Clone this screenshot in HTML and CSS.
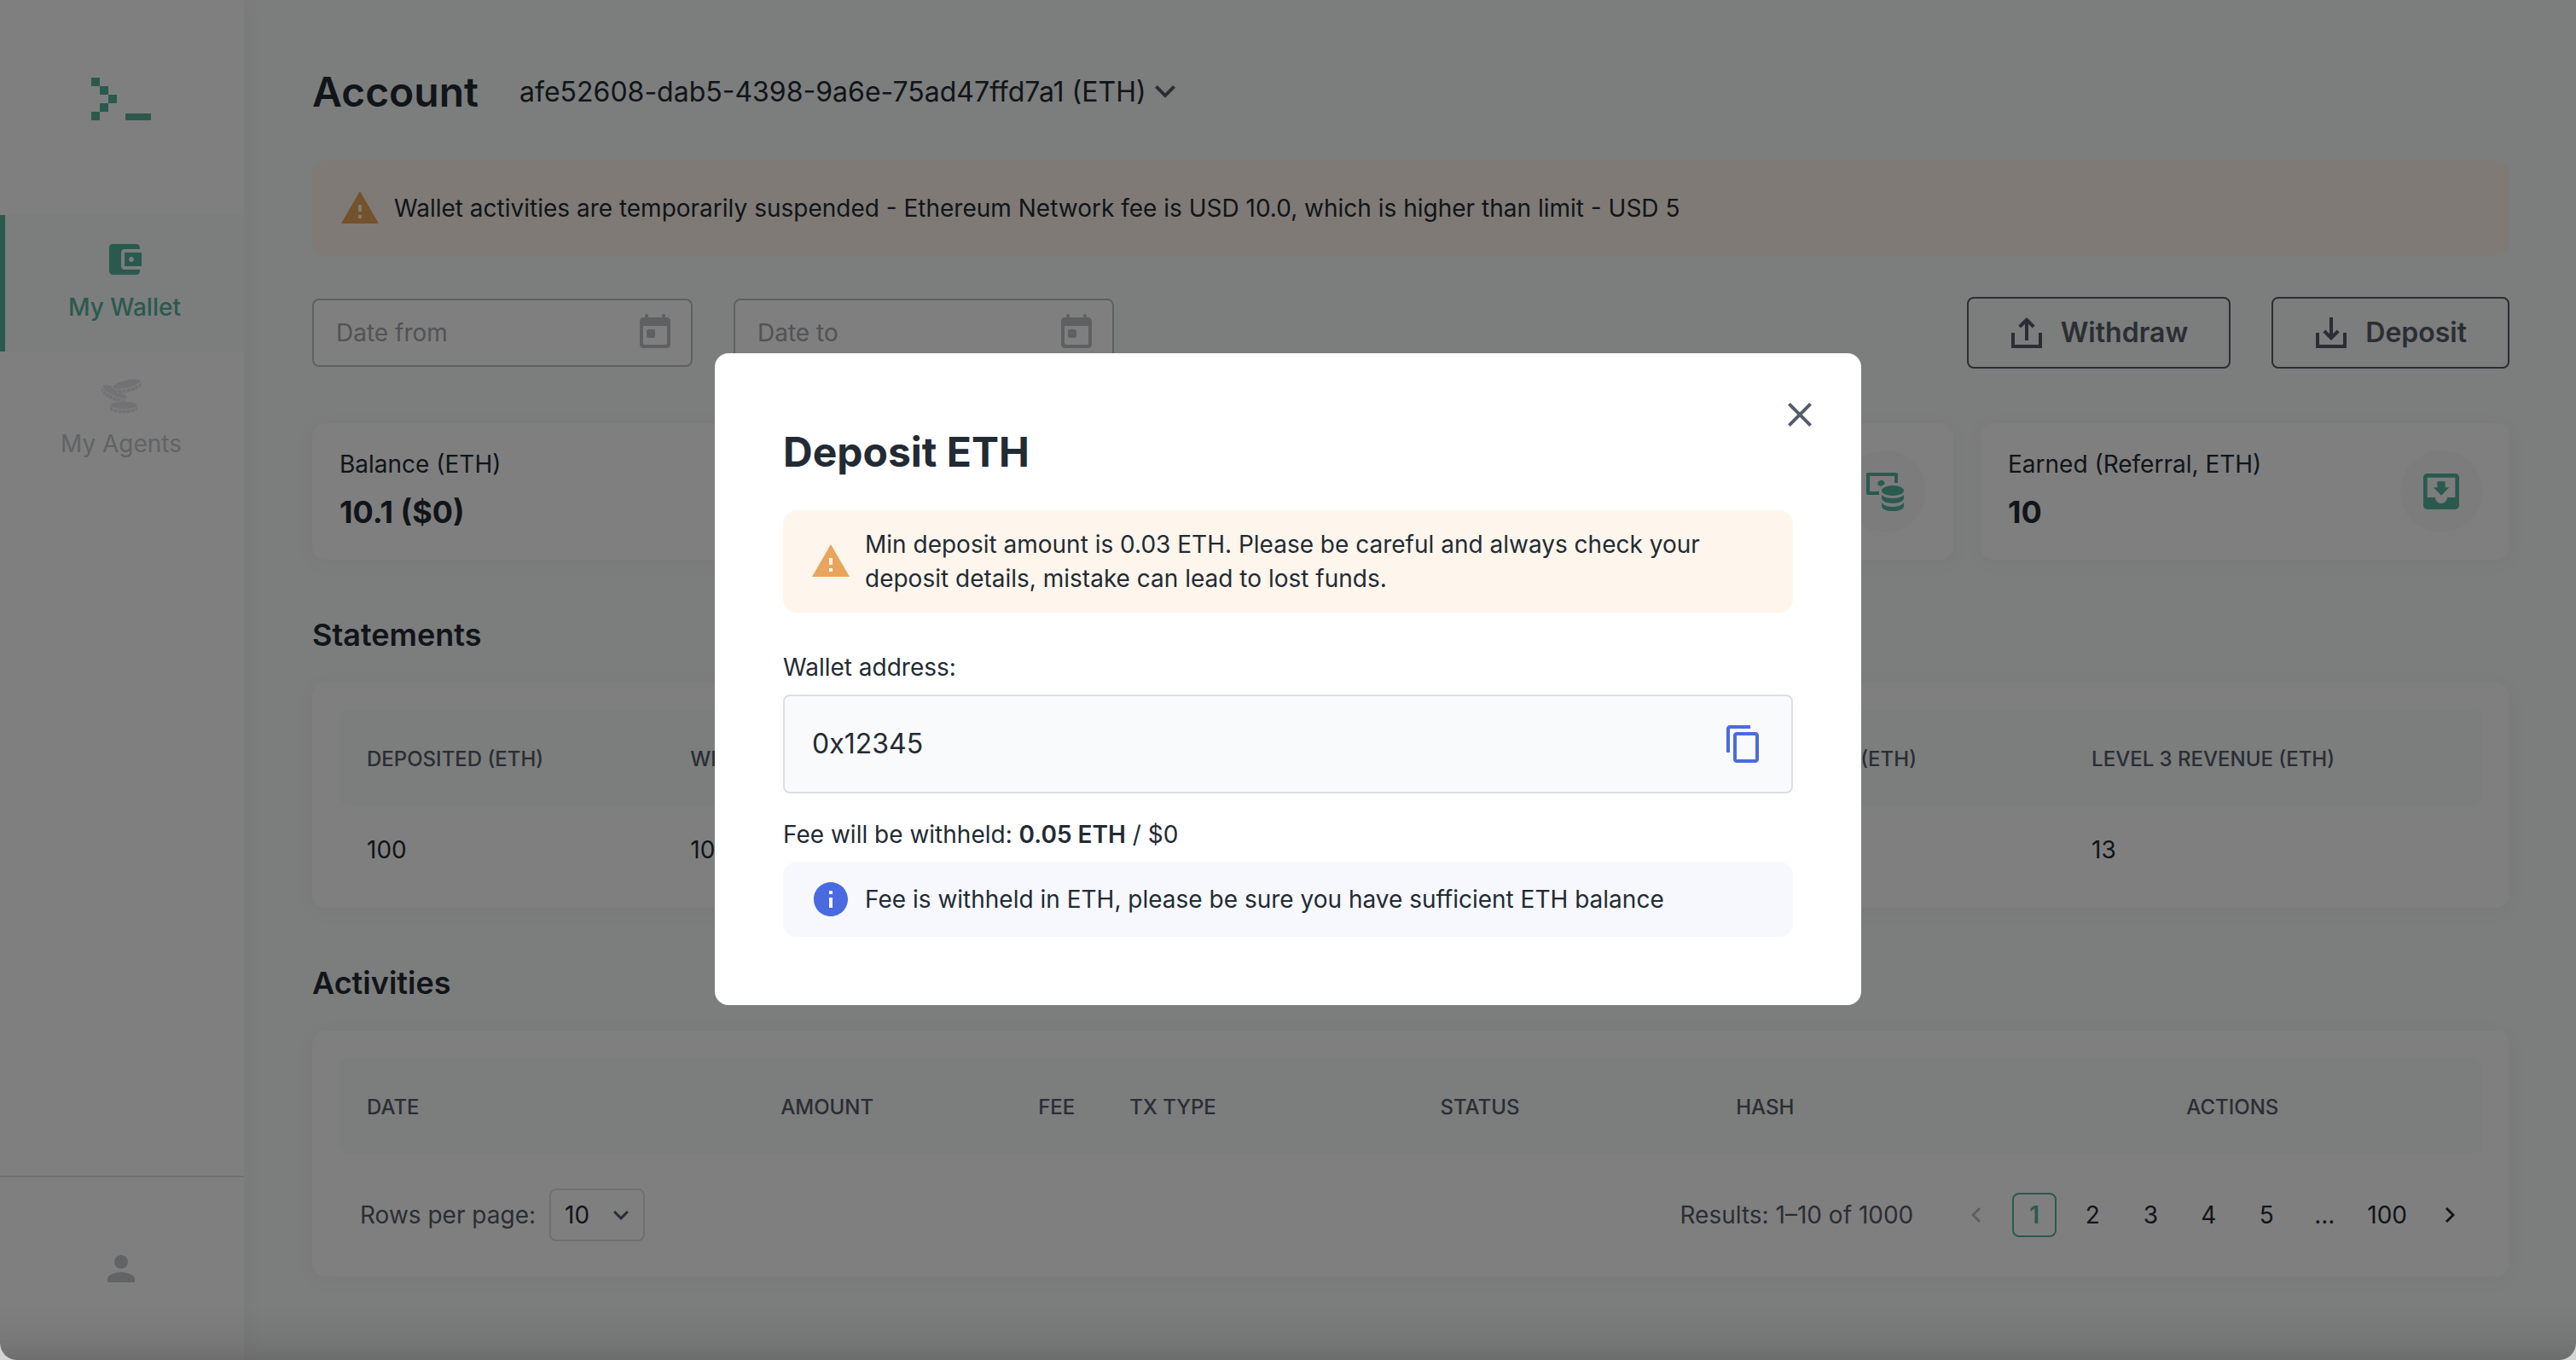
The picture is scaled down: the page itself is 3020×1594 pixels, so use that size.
FILE: index.html
```html
<!DOCTYPE html>
<html lang="en">
<head>
<meta charset="utf-8">
<meta name="viewport" content="width=device-width, initial-scale=1">
<title>Account</title>
<link rel="stylesheet" href="styles.css">
</head>
<body>
<div class="app">
  <nav class="sidebar" aria-label="Main">
    <a class="logo" href="#" aria-label="Home">
      <svg width="70" height="50" viewBox="0 0 70 50" shape-rendering="crispEdges"><path d="M0 0h10v10H0zM10 10h10v10H10zM20 20h10v10H20zM10 30h10v10H10zM0 40h10v10H0zM40 42h30v8H40z"/></svg>
    </a>
    <a class="nav-item nav-item-active" href="#">
      <svg class="icon" viewBox="0 0 24 24"><path d="M21 18v1c0 1.100-.9 2-2 2H5c-1.110 0-2-.9-2-2V5c0-1.100.89-2 2-2h14c1.100 0 2 .9 2 2v1h-9c-1.110 0-2 .9-2 2v8c0 1.100.89 2 2 2h9zm-9-2h10V8H12v8zm4-2.500c-.83 0-1.500-.67-1.500-1.500s.67-1.500 1.500-1.500 1.500.67 1.500 1.500-.67 1.500-1.500 1.500z"/></svg>
      My Wallet
    </a>
    <a class="nav-item" href="#">
      <svg class="icon icon-coins" viewBox="0 -4 48 48">
        <g transform="rotate(27 16 16)"><path d="M1 15v4c0 3 6 6 15 6s16-3 16-6v-4z"/><path class="cut" d="M4 18v6M8 20v6M12 21v6M17 21v6M22 21v6M27 19v6"/><ellipse class="face" cx="16" cy="15" rx="16" ry="5"/></g>
        <g transform="rotate(-13 31 8)"><path d="M15 6v4c0 3 6 6 16 6s17-3 17-6V6z"/><path class="cut" d="M19 9v6M24 11v6M29 12v6M34 12v6M39 11v6M44 9v6"/><ellipse class="face" cx="31" cy="6" rx="17" ry="5"/></g>
        <g><path d="M11 31v4c0 3 6 5 16 5s16-2 16-5v-4z"/><path class="cut" d="M15 33v7M20 35v6M25 35v6M30 35v6M35 35v6M40 33v7"/><ellipse class="face" cx="27" cy="31" rx="16" ry="5"/></g>
      </svg>
      My Agents
    </a>
    <a class="profile" href="#" aria-label="Profile">
      <svg class="icon" viewBox="0 0 24 24"><path d="M12 12c2.210 0 4-1.790 4-4s-1.790-4-4-4-4 1.790-4 4 1.790 4 4 4zm0 2c-2.670 0-8 1.340-8 4v1.200c0 .44.36.8.8.8h14.400c.44 0 .8-.36.8-.8V18c0-2.660-5.330-4-8-4z"/></svg>
    </a>
  </nav>

  <main class="main">
    <header class="header">
      <h1 class="title">Account</h1>
      <div class="select account-select">
        <select aria-label="Account">
          <option>afe52608-dab5-4398-9a6e-75ad47ffd7a1 (ETH)</option>
        </select>
        <svg class="chevron" viewBox="0 0 24 24"><path d="M7.400 8 12 12.600l4.600-4.600L18 9.400l-6 6-6-6z"/></svg>
      </div>
    </header>

    <div class="notice notice-warning notice-page">
      <svg class="icon" viewBox="0 0 24 24"><path d="M1 21h22L12 2 1 21zm12-3h-2v-2h2v2zm0-4h-2v-4h2v4z"/></svg>
      <p>Wallet activities are temporarily suspended - Ethereum Network fee is USD 10.0, which is higher than limit - USD 5</p>
    </div>

    <div class="toolbar">
      <div class="date-field">
        <input type="text" placeholder="Date from" aria-label="Date from">
        <button type="button" aria-label="Choose start date"><svg class="icon" viewBox="0 0 24 24"><path d="M19 3h-1V2c0-.55-.45-1-1-1s-1 .45-1 1v1H8V2c0-.55-.45-1-1-1s-1 .45-1 1v1H5c-1.110 0-2 .9-2 2v14c0 1.100.89 2 2 2h14c1.100 0 2-.9 2-2V5c0-1.100-.9-2-2-2zm-1 16H6c-.55 0-1-.45-1-1V8h14v10c0 .55-.45 1-1 1zM8 10h3c.55 0 1 .45 1 1v3c0 .55-.45 1-1 1H8c-.55 0-1-.45-1-1v-3c0-.55.45-1 1-1z"/></svg></button>
      </div>
      <div class="date-field">
        <input type="text" placeholder="Date to" aria-label="Date to">
        <button type="button" aria-label="Choose end date"><svg class="icon" viewBox="0 0 24 24"><path d="M19 3h-1V2c0-.55-.45-1-1-1s-1 .45-1 1v1H8V2c0-.55-.45-1-1-1s-1 .45-1 1v1H5c-1.110 0-2 .9-2 2v14c0 1.100.89 2 2 2h14c1.100 0 2-.9 2-2V5c0-1.100-.9-2-2-2zm-1 16H6c-.55 0-1-.45-1-1V8h14v10c0 .55-.45 1-1 1zM8 10h3c.55 0 1 .45 1 1v3c0 .55-.45 1-1 1H8c-.55 0-1-.45-1-1v-3c0-.55.45-1 1-1z"/></svg></button>
      </div>
      <div class="toolbar-actions">
        <button class="button" type="button">
          <svg class="icon icon-line" viewBox="0 0 24 24"><path d="M4 12v8a1 1 0 0 0 0 0h16a1 1 0 0 0 0 0v-8M12 16.500V5M7.900 8.500 12 4.400l4.100 4.100"/></svg>
          Withdraw
        </button>
        <button class="button" type="button">
          <svg class="icon icon-line" viewBox="0 0 24 24"><path d="M4 12v8h16v-8M12 3v11.500M7.900 11 12 15.100l4.100-4.100"/></svg>
          Deposit
        </button>
      </div>
    </div>

    <section class="stats" aria-label="Totals">
      <div class="card stat"><div><p>Balance (ETH)</p><strong>10.1 ($0)</strong></div></div>
      <div class="card stat"></div>
      <div class="card stat">
        <span class="stat-icon"><svg viewBox="0 0 56 56"><path d="M7 6h34a2 2 0 0 1 2 2v10h-4v-8H10v18h11v4H8a2 2 0 0 1-2-2V7z"/><path d="M20 21a4 4 0 0 1 7-4l1 2-5 3z"/><ellipse cx="37" cy="27" rx="13" ry="6"/><path d="M24 32c3 3 8 4 13 4s10-1 13-4v4c0 3-6 6-13 6s-13-3-13-6zM24 41c3 4 8 5 13 5s10-1 13-5v4c0 4-6 6-13 6s-13-2-13-6z"/></svg></span>
      </div>
      <div class="card stat">
        <div><p>Earned (Referral, ETH)</p><strong>10</strong></div>
        <span class="stat-icon"><svg viewBox="0 0 24 24"><path d="M19 3H5c-1.110 0-2 .9-2 2v14c0 1.100.89 2 2 2h14c1.100 0 2-.9 2-2V5c0-1.100-.9-2-2-2zm0 12h-4c0 1.660-1.350 3-3 3s-3-1.340-3-3H5V5h14v10zm-3-5h-2V7h-4v3H8l4 4 4-4z"/></svg></span>
      </div>
    </section>

    <section>
      <h2 class="section-title">Statements</h2>
      <div class="card panel panel-statements">
        <table>
          <colgroup><col class="s-deposited"><col class="s-withdrawn"><col class="s-earned"><col class="s-level"><col class="s-level"><col></colgroup>
          <thead><tr><th>DEPOSITED (ETH)</th><th>WITHDRAWN (ETH)</th><th></th><th></th><th>LEVEL 2 REVENUE (ETH)</th><th>LEVEL 3 REVENUE (ETH)</th></tr></thead>
          <tbody><tr><td>100</td><td>10</td><td></td><td></td><td></td><td>13</td></tr></tbody>
        </table>
      </div>
    </section>

    <section>
      <h2 class="section-title">Activities</h2>
      <div class="card panel">
        <table>
          <colgroup><col class="a-date"><col class="a-amount"><col class="a-fee"><col class="a-type"><col class="a-status"><col class="a-hash"><col></colgroup>
          <thead><tr><th>DATE</th><th class="num">AMOUNT</th><th class="num">FEE</th><th>TX TYPE</th><th>STATUS</th><th>HASH</th><th class="center">ACTIONS</th></tr></thead>
        </table>
        <div class="pager">
          <label for="rows">Rows per page:</label>
          <div class="select rows-select">
            <select id="rows"><option>10</option></select>
            <svg class="chevron" viewBox="0 0 24 24"><path d="M7.400 8.600 12 13.200l4.600-4.600L18 10l-6 6-6-6z"/></svg>
          </div>
          <span class="results">Results: 1–10 of 1000</span>
          <div class="pages">
            <button type="button" disabled aria-label="Previous page"><svg viewBox="0 0 12 20"><path d="M10 2 2 10l8 8"/></svg></button>
            <button type="button" class="current" aria-current="page">1</button>
            <button type="button">2</button>
            <button type="button">3</button>
            <button type="button">4</button>
            <button type="button">5</button>
            <button type="button">...</button>
            <button type="button">100</button>
            <button type="button" aria-label="Next page"><svg viewBox="0 0 12 20"><path d="m2 2 8 8-8 8"/></svg></button>
          </div>
        </div>
      </div>
    </section>
  </main>
</div>

<div class="backdrop">
  <div class="modal" role="dialog" aria-modal="true" aria-labelledby="modal-title">
    <button class="modal-close" type="button" aria-label="Close"><svg class="icon" viewBox="0 0 24 24"><path d="M19 6.410 17.590 5 12 10.590 6.410 5 5 6.410 10.590 12 5 17.590 6.410 19 12 13.410 17.590 19 19 17.590 13.410 12z"/></svg></button>
    <h2 class="title modal-title" id="modal-title">Deposit ETH</h2>
    <div class="notice notice-warning modal-warning">
      <svg class="icon" viewBox="0 0 24 24"><path d="M1 21h22L12 2 1 21zm12-3h-2v-2h2v2zm0-4h-2v-4h2v4z"/></svg>
      <p>Min deposit amount is 0.03 ETH. Please be careful and always check your deposit details, mistake can lead to lost funds.</p>
    </div>
    <label class="address-label" for="address">Wallet address:</label>
    <div class="address">
      <input id="address" type="text" value="0x12345" readonly>
      <button type="button" aria-label="Copy address"><svg class="icon" viewBox="0 0 24 24"><path d="M16 1H4c-1.100 0-2 .9-2 2v14h2V3h12V1zm3 4H8c-1.100 0-2 .9-2 2v14c0 1.100.9 2 2 2h11c1.100 0 2-.9 2-2V7c0-1.100-.9-2-2-2zm0 16H8V7h11v14z"/></svg></button>
    </div>
    <p class="fee">Fee will be withheld: <strong>0.05 ETH</strong> / $0</p>
    <div class="notice notice-info">
      <svg class="icon" viewBox="0 0 24 24"><path d="M12 2C6.480 2 2 6.480 2 12s4.480 10 10 10 10-4.480 10-10S17.520 2 12 2zm1 15h-2v-6h2v6zm0-8h-2V7h2v2z"/></svg>
      <p>Fee is withheld in ETH, please be sure you have sufficient ETH balance</p>
    </div>
  </div>
</div>
</body>
</html>
```
FILE: styles.css
```css
* {
  box-sizing: border-box;
}

html {
  background: #d4d4d4;
}

body {
  margin: 0;
  font: 400 28px/40px Inter, sans-serif;
  color: #222b33;
}

h1, h2, p {
  margin: 0;
}

a {
  color: inherit;
  text-decoration: none;
}

button, input, select {
  margin: 0;
  padding: 0;
  border: 0;
  background: none;
  font: inherit;
  color: inherit;
  outline: 0;
}

svg {
  display: block;
  flex: none;
  fill: currentColor;
}

.icon {
  width: 48px;
  height: 48px;
}

.title {
  font-size: 48px;
  line-height: 72px;
  font-weight: 600;
}

/* Page frame */

.app {
  display: flex;
  min-height: 100vh;
  background: #f9fafa;
  border-radius: 0 0 20px 20px;
  overflow: hidden;
}

.sidebar {
  display: flex;
  flex-direction: column;
  flex: none;
  width: 286px;
  background: #fff;
  box-shadow: 0 0 24px rgba(0, 0, 0, 0.04);
}

.logo {
  display: flex;
  justify-content: center;
  height: 252px;
  padding: 91px 2px 0 0;
  color: #54b49c;
}

.nav-item {
  display: flex;
  flex-direction: column;
  align-items: center;
  gap: 12px;
  height: 160px;
  padding: 28px 2px 0 0;
  color: #c4c6c9;
}

.nav-item-active {
  padding-right: 0;
  border-left: 6px solid #54b49c;
  background: #f9fafa;
  color: #54b49c;
  font-weight: 500;
}

.icon-coins {
  color: #e4e5e8;
}

.icon-coins .cut {
  stroke: #fff;
  stroke-width: 1;
}

.icon-coins .face {
  stroke: #fff;
  stroke-width: 1;
}

.profile {
  display: flex;
  align-items: center;
  justify-content: center;
  height: 216px;
  margin-top: auto;
  padding-right: 2px;
  border-top: 2px solid #dcdfe3;
  color: #c4c6c9;
}

.main {
  flex: 1;
  min-width: 0;
  padding: 72px 78px 96px 80px;
}

.card {
  background: #fff;
  border-radius: 16px;
  box-shadow: 0 4px 24px rgba(0, 0, 0, 0.04);
}

/* Header */

.header {
  display: flex;
  align-items: center;
  gap: 48px;
  margin-bottom: 44px;
}

.select {
  display: flex;
  align-items: center;
  position: relative;
}

.select select {
  appearance: none;
}

.chevron {
  position: absolute;
  pointer-events: none;
  color: #545d69;
}

.account-select select {
  padding-right: 46px;
  font-size: 32px;
  line-height: 48px;
}

.account-select .chevron {
  right: 0;
  width: 48px;
  height: 48px;
}

/* Notices */

.notice {
  display: flex;
  align-items: center;
  gap: 16px;
  padding: 20px 32px;
  border-radius: 16px;
}

.notice-page {
  padding: 32px;
  margin-bottom: 48px;
}

.notice-warning {
  background: #fef5ec;
}

.notice-warning .icon {
  color: #e8a55b;
}

.notice-info {
  background: #f6f8fd;
}

.notice-info .icon {
  color: #4a6be0;
}

/* Filters and actions */

.toolbar {
  display: flex;
  align-items: center;
  gap: 48px;
  margin-bottom: 64px;
}

.date-field {
  display: flex;
  align-items: center;
  width: 446px;
  height: 80px;
  padding: 0 18px 0 26px;
  border: 2px solid #bfc1c5;
  border-radius: 8px;
  background: #fff;
}

.date-field input {
  flex: 1;
  min-width: 0;
}

.date-field input::placeholder {
  color: #a4a6a9;
  opacity: 1;
}

.date-field button {
  color: #bfc1c5;
}

.toolbar-actions {
  display: flex;
  gap: 48px;
  margin-left: auto;
}

.button {
  display: flex;
  align-items: center;
  gap: 16px;
  height: 84px;
  padding: 0 48px 0 44px;
  border: 2px solid #545d69;
  border-radius: 8px;
  color: #545d69;
  font-size: 32px;
  font-weight: 600;
}

.icon-line {
  fill: none;
  stroke: currentColor;
  stroke-width: 2;
}

/* Totals */

.stats {
  display: grid;
  grid-template-columns: repeat(4, 1fr);
  gap: 32px;
}

.stat {
  display: flex;
  align-items: center;
  justify-content: space-between;
  min-height: 160px;
  padding: 28px 32px;
}

.stat strong {
  display: block;
  margin-top: 8px;
  font-size: 36px;
  line-height: 56px;
  font-weight: 700;
}

.stat-icon {
  display: flex;
  align-items: center;
  justify-content: center;
  width: 96px;
  height: 96px;
  margin-left: auto;
  border-radius: 50%;
  background: #f9f9f9;
  color: #54b49c;
}

.stat-icon svg {
  width: 56px;
  height: 56px;
}

/* Tables */

.section-title {
  margin: 60px 0 28px;
  font-size: 36px;
  line-height: 56px;
  font-weight: 600;
}

.panel {
  padding: 32px 32px 0;
}

.panel-statements {
  padding-bottom: 16px;
}

table {
  width: 100%;
  table-layout: fixed;
  border-collapse: separate;
  border-spacing: 0;
}

th, td {
  padding: 0 32px;
  text-align: left;
  white-space: nowrap;
}

th {
  height: 112px;
  padding-top: 4px;
  background: #f9fafa;
  color: #545d69;
  font-size: 24px;
  font-weight: 500;
}

th:first-child {
  border-radius: 12px 0 0 12px;
}

th:last-child {
  border-radius: 0 12px 12px 0;
}

td {
  height: 104px;
}

.num {
  text-align: right;
}

.center {
  text-align: center;
}

.s-deposited { width: 15.1%; }
.s-withdrawn { width: 15.4%; }
.s-earned { width: 11%; }
.s-level { width: 19.5%; }

.a-date { width: 16.8%; }
.a-amount { width: 9.4%; }
.a-fee { width: 9.4%; }
.a-type { width: 14.5%; }
.a-status { width: 13.8%; }
.a-hash { width: 12.8%; }

/* Pagination */

.pager {
  display: flex;
  align-items: center;
  height: 144px;
  padding: 0 12px 0 24px;
  color: #545d69;
}

.rows-select {
  margin-left: 16px;
  color: #222b33;
}

.rows-select select {
  width: 112px;
  height: 62px;
  padding-left: 16px;
  border: 2px solid #dcdfe3;
  border-radius: 8px;
}

.rows-select .chevron {
  right: 10px;
  width: 36px;
  height: 36px;
}

.results {
  margin-left: auto;
}

.pages {
  display: flex;
  gap: 16px;
  margin-left: 48px;
  color: #222b33;
}

.pages button {
  display: flex;
  align-items: center;
  justify-content: center;
  min-width: 52px;
  height: 52px;
  padding: 0 8px;
  border-radius: 8px;
}

.pages .current {
  border: 2px solid #54b49c;
  color: #54b49c;
  font-weight: 600;
}

.pages svg {
  width: 12px;
  height: 20px;
  fill: none;
  stroke: currentColor;
  stroke-width: 3;
}

.pages button:disabled {
  color: #bfc1c5;
}

/* Modal */

.backdrop {
  position: fixed;
  inset: 0;
  display: flex;
  align-items: center;
  justify-content: center;
  padding-bottom: 2px;
  border-radius: 0 0 20px 20px;
  background: linear-gradient(to top, rgba(0, 0, 0, 0.13), rgba(0, 0, 0, 0.05) 24px, transparent 64px), rgba(0, 0, 0, 0.5);
}

.modal {
  position: relative;
  width: 1344px;
  max-width: 100%;
  padding: 80px;
  border-radius: 16px;
  background: #fff;
}

.modal-title {
  font-weight: 700;
}

.modal-close {
  position: absolute;
  top: 48px;
  right: 48px;
  color: #545d69;
}

.modal-warning {
  margin: 32px 0 44px;
}

.address-label {
  display: block;
  margin-bottom: 12px;
}

.address {
  display: flex;
  align-items: center;
  height: 116px;
  padding: 0 32px;
  border: 2px solid #dcdfe3;
  border-radius: 8px;
  background: #f9fafc;
}

.address input {
  flex: 1;
  min-width: 0;
  font-size: 32px;
}

.address button {
  color: #4a6be0;
}

.fee {
  margin: 28px 0 12px;
}

.fee strong {
  font-weight: 600;
}
```
